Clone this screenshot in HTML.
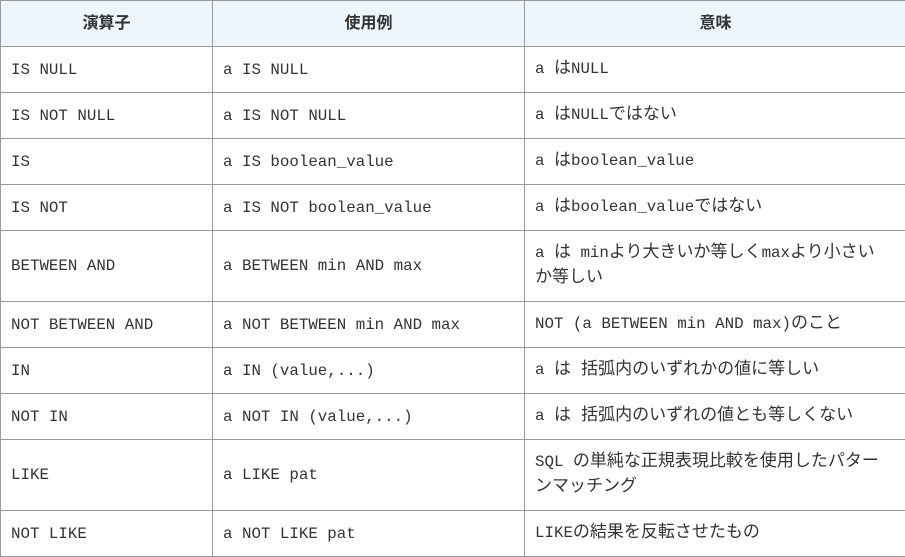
<!DOCTYPE html>
<html><head><meta charset="utf-8"><style>
html,body{margin:0;padding:0;background:#fff;width:905px;height:556px;overflow:hidden}
table{border-collapse:collapse;table-layout:fixed;position:absolute;left:0;top:0;width:906px}
td,th{border:1px solid #999;padding:0 10px;color:#333;font-family:"Liberation Mono","Noto Sans CJK JP",monospace;font-size:15.8px;line-height:24px;vertical-align:middle;text-align:left;box-sizing:border-box;white-space:nowrap}
th{background:#eef6fd;font-family:"Liberation Sans","Noto Sans CJK JP",sans-serif;font-weight:bold;font-size:16px;text-align:center;height:46px}
tr.r td{height:46px}
tr.t td{height:71px}
.j{font-size:17px}
</style></head><body>
<table>
<colgroup><col style="width:212px"><col style="width:312px"><col style="width:382px"></colgroup>
<tr><th>演算子</th><th>使用例</th><th>意味</th></tr>
<tr class="r"><td>IS NULL</td><td>a IS NULL</td><td>a <span class="j">は</span>NULL</td></tr>
<tr class="r"><td>IS NOT NULL</td><td>a IS NOT NULL</td><td>a <span class="j">は</span>NULL<span class="j">ではない</span></td></tr>
<tr class="r"><td>IS</td><td>a IS boolean_value</td><td>a <span class="j">は</span>boolean_value</td></tr>
<tr class="r"><td>IS NOT</td><td>a IS NOT boolean_value</td><td>a <span class="j">は</span>boolean_value<span class="j">ではない</span></td></tr>
<tr class="t"><td>BETWEEN AND</td><td>a BETWEEN min AND max</td><td>a <span class="j">は</span> min<span class="j">より大きいか等しく</span>max<span class="j">より小さい</span><br><span class="j">か等しい</span></td></tr>
<tr class="r"><td>NOT BETWEEN AND</td><td>a NOT BETWEEN min AND max</td><td>NOT (a BETWEEN min AND max)<span class="j">のこと</span></td></tr>
<tr class="r"><td>IN</td><td>a IN (value,...)</td><td>a <span class="j">は 括弧内のいずれかの値に等しい</span></td></tr>
<tr class="r"><td>NOT IN</td><td>a NOT IN (value,...)</td><td>a <span class="j">は 括弧内のいずれの値とも等しくない</span></td></tr>
<tr class="t"><td>LIKE</td><td>a LIKE pat</td><td>SQL <span class="j">の単純な正規表現比較を使用したパター</span><br><span class="j">ンマッチング</span></td></tr>
<tr class="r"><td>NOT LIKE</td><td>a NOT LIKE pat</td><td>LIKE<span class="j">の結果を反転させたもの</span></td></tr>
</table>
</body></html>
